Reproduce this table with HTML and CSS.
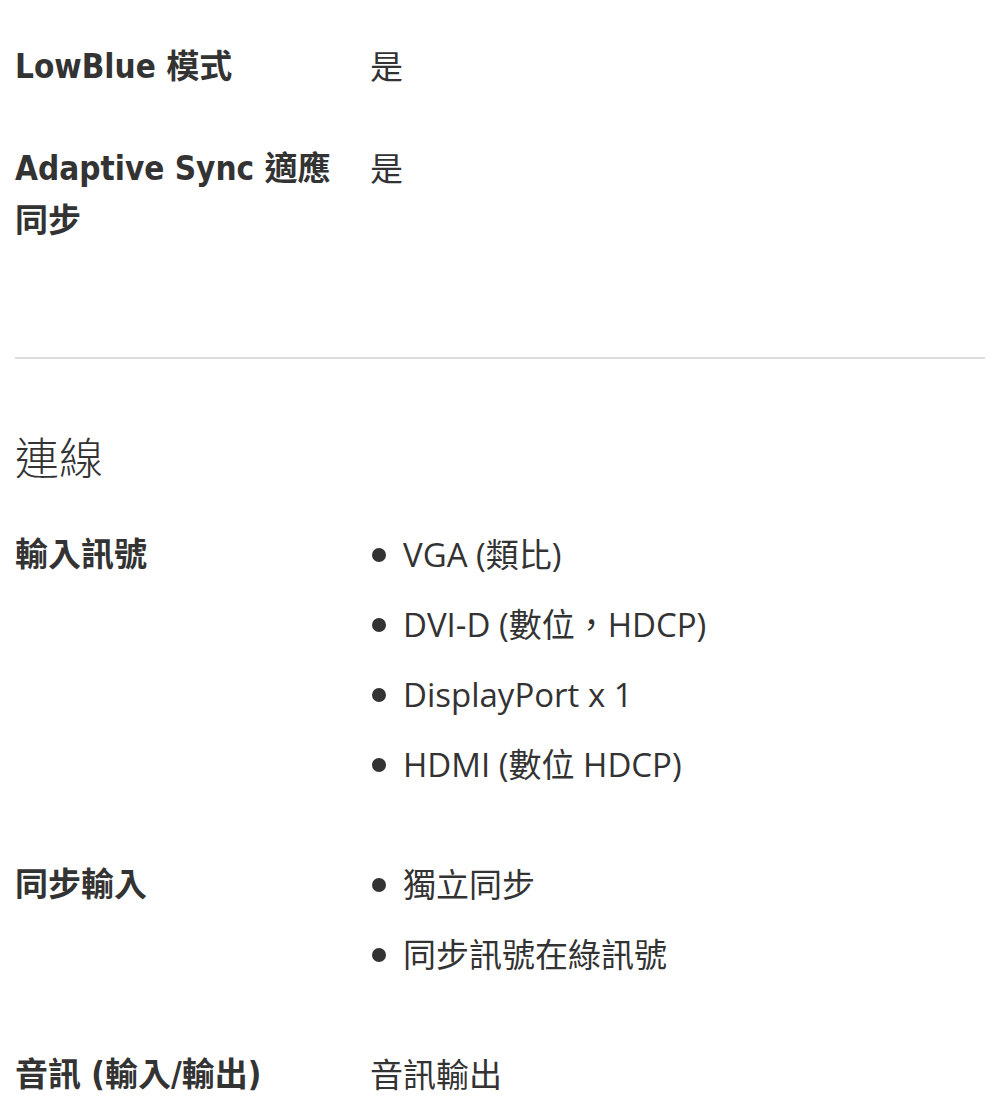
FILE: index.html
```html
<!DOCTYPE html>
<html lang="zh-TW">
<head>
    <meta charset="UTF-8">
    <meta name="viewport" content="width=device-width, initial-scale=1.0">
    <title>規格</title>
    <link rel="stylesheet" href="styles.css">
</head>
<body>
    <div class="specs">
        <section class="spec-group">
            <div class="spec-row">
                <div class="spec-label">LowBlue 模式</div>
                <div class="spec-value">是</div>
            </div>
            <div class="spec-row">
                <div class="spec-label">Adaptive Sync 適應同步</div>
                <div class="spec-value">是</div>
            </div>
        </section>

        <hr class="divider">

        <section class="spec-group">
            <h2 class="group-title">連線</h2>
            <div class="spec-row">
                <div class="spec-label">輸入訊號</div>
                <ul class="spec-value spec-list">
                    <li>VGA (類比)</li>
                    <li>DVI-D (數位，HDCP)</li>
                    <li>DisplayPort x 1</li>
                    <li>HDMI (數位 HDCP)</li>
                </ul>
            </div>
            <div class="spec-row">
                <div class="spec-label">同步輸入</div>
                <ul class="spec-value spec-list">
                    <li>獨立同步</li>
                    <li>同步訊號在綠訊號</li>
                </ul>
            </div>
            <div class="spec-row">
                <div class="spec-label">音訊 (輸入/輸出)</div>
                <div class="spec-value">音訊輸出</div>
            </div>
        </section>
    </div>
</body>
</html>
```

FILE: styles.css
```css
/* Global */
* {
    margin: 0;
    padding: 0;
    box-sizing: border-box;
}

body {
    background-color: #fff;
    color: #333;
    font-family: 'Open Sans', 'Noto Sans CJK TC', sans-serif;
}

.specs {
    padding: 41px 15px 0;
}

/* Rows */
.spec-group {
    display: flex;
    flex-direction: column;
}

.spec-row {
    display: flex;
    gap: 15px;
    margin-bottom: 50px;
}

.spec-label {
    width: 340px;
    flex-shrink: 0;
    font-family: 'DejaVu Sans Condensed', 'DejaVu Sans', 'Noto Sans CJK TC', sans-serif;
    font-weight: bold;
    font-size: 33px;
    line-height: 52px;
    color: #333;
}

.spec-value {
    flex: 1;
    font-size: 33px;
    line-height: 52px;
    color: #333;
}

/* Bullet lists */
.spec-list {
    list-style: none;
}

.spec-list li {
    display: flex;
    align-items: center;
    margin-bottom: 18px;
}

.spec-list li::before {
    content: '';
    width: 14px;
    height: 14px;
    margin: 0 17px 0 2px;
    border-radius: 50%;
    background-color: #333;
    flex-shrink: 0;
}

/* Divider + headings */
.divider {
    border: none;
    border-top: 2px solid #ddd;
    margin: 60px 0 67px;
}

.group-title {
    font-family: 'Noto Sans CJK TC', sans-serif;
    font-weight: 300;
    font-size: 44px;
    line-height: 60px;
    margin-bottom: 43px;
}
```
